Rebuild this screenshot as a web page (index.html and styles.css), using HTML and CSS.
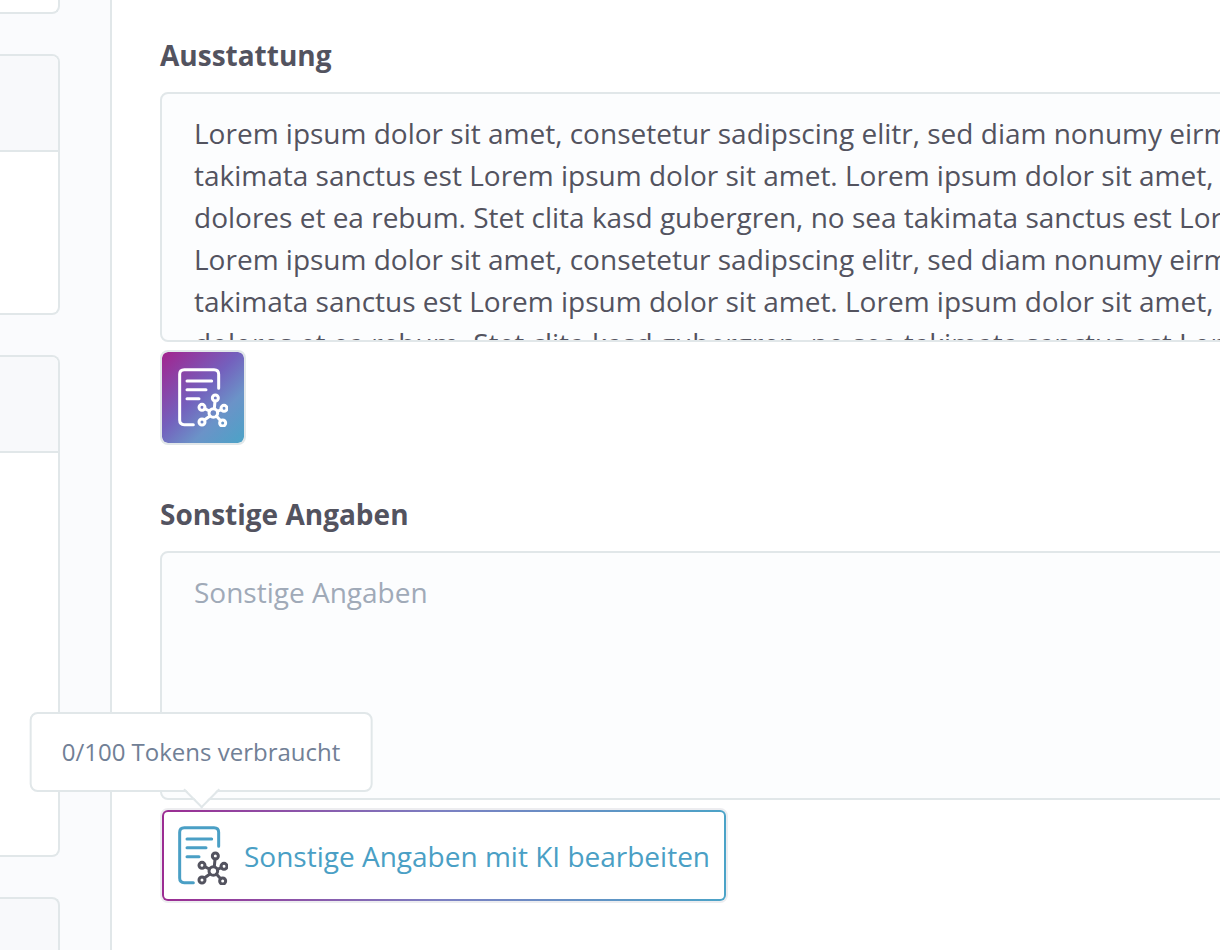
FILE: index.html
```html
<!DOCTYPE html>
<html lang="de">
<head>
    <meta charset="UTF-8">
    <meta name="viewport" content="width=device-width, initial-scale=1.0">
    <title>Objekt bearbeiten</title>
    <link rel="stylesheet" href="styles.css">
</head>
<body>
    <aside class="sidebar">
        <div class="panel panel-end"></div>
        <div class="panel">
            <div class="panel-head"></div>
            <div class="panel-body"></div>
        </div>
        <div class="panel">
            <div class="panel-head"></div>
            <div class="panel-body panel-body-tall"></div>
        </div>
        <div class="panel panel-open"></div>
    </aside>

    <main class="content">
        <div class="field">
            <label for="ausstattung">Ausstattung</label>
            <textarea id="ausstattung" class="text-long" wrap="off">Lorem ipsum dolor sit amet, consetetur sadipscing elitr, sed diam nonumy eirmod tempor
takimata sanctus est Lorem ipsum dolor sit amet. Lorem ipsum dolor sit amet, consetetur
dolores et ea rebum. Stet clita kasd gubergren, no sea takimata sanctus est Lorem ipsum
Lorem ipsum dolor sit amet, consetetur sadipscing elitr, sed diam nonumy eirmod tempor
takimata sanctus est Lorem ipsum dolor sit amet. Lorem ipsum dolor sit amet, consetetur
dolores et ea rebum. Stet clita kasd gubergren, no sea takimata sanctus est Lorem ipsum</textarea>
            <button type="button" class="ai-button ai-button-filled" aria-label="Ausstattung mit KI bearbeiten">
                <svg class="ai-icon" viewBox="0 0 150 177" aria-hidden="true">
                    <g class="doc">
                        <path d="M46 170H19Q5 170 5 156V19Q5 5 19 5H108Q122 5 122 19V61"/>
                        <path d="M27 39H101M27 65H84M27 92H63"/>
                    </g>
                    <g class="nodes">
                        <circle cx="106" cy="135" r="13"/>
                        <circle cx="112" cy="90" r="9"/>
                        <circle cx="72" cy="118" r="9"/>
                        <circle cx="138" cy="121" r="9"/>
                        <circle cx="72" cy="162" r="9"/>
                        <circle cx="134" cy="165" r="9"/>
                        <path d="M111 99L109 122M80 122L94 129M130 125L118 130M79 156L96 144M128 158L115 144"/>
                    </g>
                </svg>
            </button>
        </div>

        <div class="field">
            <label for="sonstige">Sonstige Angaben</label>
            <textarea id="sonstige" placeholder="Sonstige Angaben"></textarea>
            <button type="button" class="ai-button ai-button-outline" aria-describedby="tokens">
                <svg class="ai-icon" viewBox="0 0 150 177" aria-hidden="true">
                    <g class="doc">
                        <path d="M46 170H19Q5 170 5 156V19Q5 5 19 5H108Q122 5 122 19V61"/>
                        <path d="M27 39H101M27 65H84M27 92H63"/>
                    </g>
                    <g class="nodes">
                        <circle cx="106" cy="135" r="13"/>
                        <circle cx="112" cy="90" r="9"/>
                        <circle cx="72" cy="118" r="9"/>
                        <circle cx="138" cy="121" r="9"/>
                        <circle cx="72" cy="162" r="9"/>
                        <circle cx="134" cy="165" r="9"/>
                        <path d="M111 99L109 122M80 122L94 129M130 125L118 130M79 156L96 144M128 158L115 144"/>
                    </g>
                </svg>
                <span>Sonstige Angaben mit KI bearbeiten</span>
                <span class="tooltip" id="tokens" role="tooltip">0/100 Tokens verbraucht</span>
            </button>
        </div>
    </main>
</body>
</html>
```
FILE: styles.css
```css
* {
    box-sizing: border-box;
}
body {
    display: flex;
    height: 100vh;
    margin: 0;
    overflow: hidden;
    background: #fff;
    color: #53535f;
    font-family: "Open Sans", sans-serif;
    font-size: 28px;
    line-height: 42px;
}

/* Sidebar */
.sidebar {
    display: flex;
    flex: none;
    flex-direction: column;
    gap: 40px;
    width: 112px;
    padding-right: 50px;
    background: #fafbfd;
    border-right: 2px solid #e1e7e9;
}
.panel {
    flex: none;
    overflow: hidden;
    background: #fff;
    border: 2px solid #e1e7e9;
    border-left: none;
    border-radius: 0 8px 8px 0;
}
.panel-end {
    height: 14px;
    border-top: none;
    border-top-right-radius: 0;
}
.panel-open {
    flex: 1;
    background: #f8f9fb;
    border-bottom: none;
    border-bottom-right-radius: 0;
}
.panel-head {
    height: 96px;
    background: #f8f9fb;
    border-bottom: 2px solid #e1e7e9;
}
.panel-body {
    height: 161px;
}
.panel-body-tall {
    height: 402px;
}

/* Form */
.content {
    flex: 1;
    min-width: 0;
    padding: 34px 0 0 48px;
}
.field {
    display: flex;
    flex-direction: column;
    align-items: flex-start;
    margin-bottom: 48px;
}
label {
    margin-bottom: 16px;
    font-weight: 700;
}
/* fields run out past the right edge of the window */
textarea {
    width: calc(100% + 48px);
    height: 249px;
    margin: 0 0 8px;
    padding: 18px 32px;
    overflow: hidden;
    resize: none;
    background: #fcfdfe;
    border: 2px solid #e1e7e9;
    border-radius: 8px;
    color: inherit;
    font: inherit;
}
textarea::placeholder {
    color: #a0aab8;
    opacity: 1;
}
.text-long {
    height: 250px;
}

/* AI buttons */
.ai-button {
    position: relative;
    display: flex;
    align-items: center;
    gap: 16px;
    padding: 16px;
    border: 2px solid transparent;
    border-radius: 8px;
    font: inherit;
    cursor: pointer;
}
.ai-button-filled {
    background: linear-gradient(135deg, #a3238e 0%, #7460bd 45%, #6b93c8 70%, #4ba3c7 100%) padding-box;
    border-color: #e1e7e9;
    color: #fff;
}
.ai-button-outline {
    border-color: #ededf0;
    background: #fff;
    color: #4a9fc5;
}
.ai-button-outline::before {
    content: "";
    position: absolute;
    inset: 0;
    border: 2px solid transparent;
    border-radius: 6px;
    background: linear-gradient(#fff, #fff) padding-box, linear-gradient(90deg, #9b2c92, #7b80c2 50%, #4ba3c7) border-box;
}
.ai-button > * {
    position: relative;
}
.ai-icon {
    flex: none;
    width: 50px;
    height: 59px;
    fill: none;
    stroke: currentColor;
    stroke-width: 9;
    stroke-linecap: round;
    stroke-linejoin: round;
}
.ai-button-outline .nodes {
    stroke: #53535f;
}

/* Tooltip */
.ai-button > .tooltip {
    position: absolute;
    bottom: calc(100% + 18px);
    left: 39px;
    padding: 17px 30px;
    transform: translateX(-50%);
    background: #fff;
    border: 2px solid #e1e7e9;
    border-radius: 8px;
    color: #718096;
    font-size: 24px;
    white-space: nowrap;
}
.tooltip::after {
    content: "";
    position: absolute;
    bottom: -13px;
    left: calc(50% - 12px);
    width: 24px;
    height: 24px;
    transform: rotate(45deg);
    background: linear-gradient(135deg, transparent 50%, #fff 50%);
    border: solid #e1e7e9;
    border-width: 0 2px 2px 0;
}
```
